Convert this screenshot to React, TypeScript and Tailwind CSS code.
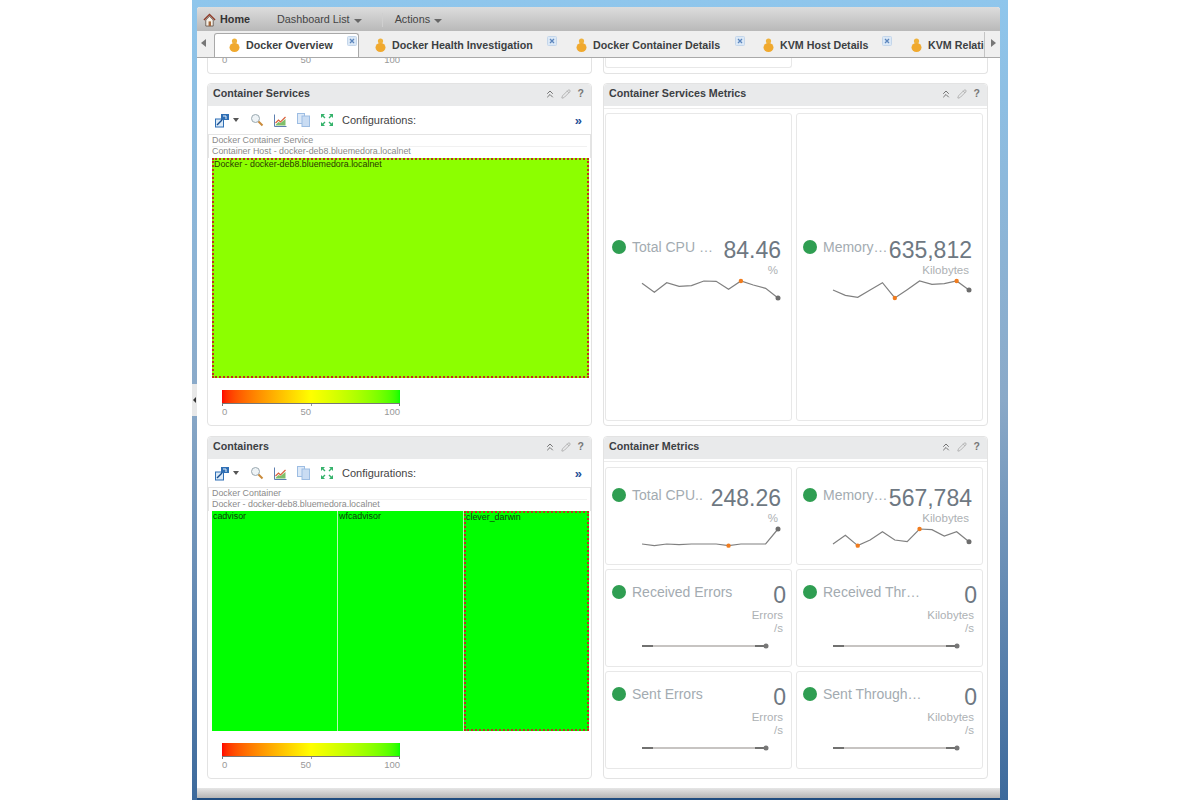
import { ChevronsUp, Pencil } from "lucide-react";

const tabs = [
  { label: "Docker Overview", active: true, width: "w-[145px]", text: "w-[100px]" },
  { label: "Docker Health Investigation", width: "w-[201px]", text: "w-[154px]" },
  { label: "Docker Container Details", width: "w-[187px]", text: "w-[141px]" },
  { label: "KVM Host Details", width: "w-[148px]", text: "w-[101px]" },
  { label: "KVM Relationships", width: "w-[148px]", text: "w-[102px]" },
];

const servicesMetrics = [
  { title: "Total CPU …", value: "84.46", unit: ["%"], ys: [188, 215, 186, 197, 195, 181, 182, 206, 181, 193, 203, 232], marks: [8] },
  { title: "Memory…", value: "635,812", unit: ["Kilobytes"], ys: [208, 224, 230, 208, 186, 232, 207, 181, 191, 189, 181, 208], marks: [5, 10] },
];

const containerMetrics = [
  { title: "Total CPU..", value: "248.26", unit: ["%"], ys: [188, 193, 188, 190, 188, 188, 188, 193, 188, 188, 188, 143], marks: [7] },
  { title: "Memory…", value: "567,784", unit: ["Kilobytes"], ys: [188, 162, 193, 176, 151, 176, 181, 143, 145, 164, 151, 181], marks: [2, 7] },
  { title: "Received Errors", value: "0", unit: ["Errors", "/s"], flat: true },
  { title: "Received Thr…", value: "0", unit: ["Kilobytes", "/s"], flat: true },
  { title: "Sent Errors", value: "0", unit: ["Errors", "/s"], flat: true },
  { title: "Sent Through…", value: "0", unit: ["Kilobytes", "/s"], flat: true },
];

function HomeIcon() {
  return (
    <svg width="13" height="14" viewBox="0 0 14 15" className="shrink-0">
      <path d="M1 7.500 7 1.500l6 6" fill="none" stroke="#8f3a26" strokeWidth="1.500" />
      <path d="M3 7.500V14h8V7.500L7 3.500z" fill="#f3efe6" stroke="#5f5148" strokeWidth="0.9" />
      <rect x="6" y="9" width="2.600" height="5" fill="#a5673a" />
    </svg>
  );
}

function PersonIcon() {
  return (
    <svg width="11" height="14" viewBox="0 0 11 14" className="shrink-0">
      <circle cx="5.500" cy="3" r="2.600" fill="#efb23c" />
      <ellipse cx="5.500" cy="9.500" rx="5" ry="4.500" fill="#f0a92e" />
    </svg>
  );
}

function CloseBadge() {
  return (
    <svg width="10" height="10" viewBox="0 0 10 10">
      <rect x="0.500" y="0.500" width="9" height="9" rx="1" fill="#dbe8f6" stroke="#c4d6ea" />
      <path d="M3 3l4 4M7 3l-4 4" stroke="#5c86bd" strokeWidth="1.300" />
    </svg>
  );
}

function Caret() {
  return <span className="block w-0 h-0 border-x-[4px] border-x-transparent border-t-[4px] border-t-[#666] mt-[2px]" />;
}

function PanelHeader({ title }: { title: string }) {
  return (
    <div className="h-[22px] bg-[#e9eaeb] flex items-center pl-[5px] pr-[7px] pb-[3px] rounded-t-sm">
      <span className="font-bold text-[10.7px] text-[#3c4043] flex-1">{title}</span>
      <ChevronsUp size={12} color="#555" strokeWidth={1.600} />
      <Pencil size={10} color="#aaa" className="ml-[5px]" />
      <span className="ml-[7px] font-bold text-[10.5px] text-[#777]">?</span>
    </div>
  );
}

function Toolbar() {
  return (
    <div className="h-[28px] flex items-center pl-[7px] pr-[9px] shrink-0">
      <svg width="15" height="15" viewBox="0 0 15 15">
        <rect x="0.500" y="6" width="8" height="8" fill="#dbeaf8" stroke="#2f6fb5" />
        <rect x="6" y="1" width="8" height="6" fill="#2f6fb5" />
        <path d="M8 3h3v3" fill="none" stroke="#e6f0fa" />
        <path d="M2 12l5-5" stroke="#1a4f8f" strokeWidth="1.400" />
      </svg>
      <span className="ml-[3px] mr-[11px]">
        <span className="block w-0 h-0 border-x-[3.5px] border-x-transparent border-t-[4px] border-t-[#555]" />
      </span>
      <svg width="14" height="14" viewBox="0 0 14 14" className="mr-[10px]">
        <circle cx="5.500" cy="5.500" r="4" fill="#eef3f6" stroke="#9aa8b0" />
        <path d="M8.500 8.500l4 4" stroke="#c98a3a" strokeWidth="2" />
      </svg>
      <svg width="13" height="13" viewBox="0 0 13 13" className="mr-[10px]">
        <path d="M1.500 11l3-3 2 1 5-4v6.500h-10z" fill="#7fbf6a" />
        <path d="M.5.5v12h12" fill="none" stroke="#5d7fb0" />
        <path d="M1.500 9l3-3 2 2 5-5" fill="none" stroke="#d9603b" strokeWidth="1.200" />
      </svg>
      <svg width="13" height="14" viewBox="0 0 13 14" className="mr-[10px]">
        <rect x="0.500" y="0.500" width="7" height="10" fill="#dce9f8" stroke="#9dbde3" />
        <rect x="5" y="3" width="7.500" height="10.500" fill="#c9dcf3" stroke="#9dbde3" />
      </svg>
      <svg width="14" height="14" viewBox="0 0 14 14" className="mr-[8px]">
        <path d="M1 1h4L1 5zM13 1H9l4 4zM1 13h4l-4-4zM13 13H9l4-4z" fill="#35b26b" />
        <path d="M2 2l3 3M12 2L9 5M2 12l3-3M12 12L9 9" stroke="#35b26b" strokeWidth="1.400" />
      </svg>
      <span className="text-[11px] text-[#444] flex-1">Configurations:</span>
      <span className="font-bold text-[13px] leading-[13px] text-[#1f4f96]">»</span>
    </div>
  );
}

function Legend() {
  return (
    <div className="w-[178px] ml-[14px] mt-[12px]">
      <div className="h-[14px] bg-gradient-to-r from-[#ff0000] via-[#ffff00] to-[#00ff00] border-b border-[#777]" />
      <div className="flex justify-between h-[2px]">
        <span className="w-px bg-[#777]" />
        <span className="w-px bg-[#999]" />
        <span className="w-px bg-[#777]" />
      </div>
      <div className="flex justify-between text-[9.5px] leading-[12px] text-[#999]">
        <span>0</span>
        <span>50</span>
        <span>100</span>
      </div>
    </div>
  );
}

function HeatPanel({ title, crumbs, children }: { title: string; crumbs: string[]; children: React.ReactNode }) {
  return (
    <section className="flex-1 flex flex-col border border-[#e3e3e3] rounded-sm">
      <PanelHeader title={title} />
      <Toolbar />
      <div className="border-t border-x border-[#e4e4e4] px-[3px]">
        <div className="h-[11px] leading-[11px] text-[8.9px] text-[#8a8a8a] whitespace-nowrap">{crumbs[0]}</div>
        <div className="h-[12px] leading-[9px] text-[8.9px] text-[#8a8a8a] whitespace-nowrap border-t border-[#f1f1f1]">{crumbs[1]}</div>
      </div>
      {children}
      <Legend />
    </section>
  );
}

function Spark({ ys, marks, flat }: { ys?: number[]; marks?: number[]; flat?: boolean }) {
  if (flat || !ys) {
    return (
      <svg width="130" height="8" viewBox="0 0 130 8" className="ml-[36px] block">
        <path d="M0 4h124" stroke="#8f8a86" strokeWidth="1.200" />
        <path d="M0 4h11M113 4h11" stroke="#555" strokeWidth="1.400" />
        <circle cx="124" cy="4" r="2.500" fill="#777" />
      </svg>
    );
  }
  const pts = ys.map((y, i) => [(i * 136) / 11 + 2, y / 3] as const);
  const minY = Math.min(...ys) / 3 - 3;
  return (
    <svg width="142" height="34" viewBox={`0 ${minY} 142 34`} className="ml-[34px] block">
      <polyline points={pts.map((p) => p.join(",")).join(" ")} fill="none" stroke="#808080" strokeWidth="1.200" />
      {marks?.map((m) => <circle key={m} cx={pts[m][0]} cy={pts[m][1]} r="2.200" fill="#f07c1e" />)}
      <circle cx={pts[11][0]} cy={pts[11][1]} r="2.500" fill="#6d6d6d" />
    </svg>
  );
}

type Metric = { title: string; value: string; unit: string[]; ys?: number[]; marks?: number[]; flat?: boolean };

function MetricCard({ m, tall }: { m: Metric; tall?: boolean }) {
  return (
    <div className={`flex flex-col justify-center border border-[#e8e8e8] rounded-[3px] min-w-0 ${tall ? "h-[308px] pt-[14px]" : "h-[98px]"} ${!tall && !m.flat ? "pt-[12px]" : ""}`}>
      <div className={`flex items-start pl-[6px] ${m.flat ? "pr-[5px]" : "pr-[10px]"}`}>
        <span className="w-[14px] h-[14px] mt-px rounded-full bg-[#2f9e52] shrink-0" />
        <span className="ml-[6px] text-[14px] leading-[16px] text-[#a3abb1] whitespace-nowrap flex-1">{m.title}</span>
        <span className="text-[23px] leading-[24px] mt-[-1px] text-[#6e7882] whitespace-nowrap">{m.value}</span>
      </div>
      <div className={`text-right text-[11.5px] leading-[13px] text-[#adb1b4] mt-[2px] ${m.flat ? "pr-[8px]" : "pr-[13px]"}`}>
        {m.unit.map((u) => <div key={u}>{u}</div>)}
      </div>
      <div className={m.flat ? "mt-[7px] mb-[2px]" : "mt-px h-[32px]"}>
        <Spark ys={m.ys} marks={m.marks} flat={m.flat} />
      </div>
    </div>
  );
}

export default function App() {
  return (
    <div className="h-[800px] flex justify-center bg-white overflow-hidden" style={{ fontFamily: '"Liberation Sans", Arial, sans-serif' }}>
      <div className="relative w-[816px] h-[800px] pl-[5px] pr-[8px] pt-[7px] bg-gradient-to-b from-[#8fc6ec] via-[#8aa9c8] to-[#3d6a9c]">
        {/* collapse handle */}
        <div className="absolute left-0 top-[384px] w-[5px] h-[32px] bg-[#e8e8e8] flex items-center justify-center">
          <span className="w-0 h-0 border-y-[3px] border-y-transparent border-r-[3px] border-r-[#333]" />
        </div>

        <div className="flex flex-col h-[791px] bg-white overflow-hidden rounded-t-[3px]">
          {/* top nav */}
          <div className="h-[24px] shrink-0 bg-gradient-to-b from-[#dddddd] to-[#b9b9b9] flex items-center pl-[6px] pt-px text-[10.8px] text-[#444]">
            <HomeIcon />
            <span className="ml-[4px] font-bold text-[#333] w-[57px]">Home</span>
            <span>Dashboard List</span>
            <span className="ml-[4px]"><Caret /></span>
            <span className="ml-[20px] w-px h-[14px] bg-[#cfcfcf]" />
            <span className="ml-[12px]">Actions</span>
            <span className="ml-[4px]"><Caret /></span>
          </div>

          {/* tab strip */}
          <div className="h-[27px] shrink-0 bg-[#efefef] border-b border-[#a9a9a9] flex items-end">
            <div className="w-[17px] h-[25px] shrink-0 flex items-center pl-[4px] pb-[3px]">
              <span className="w-0 h-0 border-y-[4px] border-y-transparent border-r-[5px] border-r-[#777]" />
            </div>
            <div className="flex items-end flex-1 overflow-hidden min-w-0">
              {tabs.map((t) => (
                <div
                  key={t.label}
                  className={`${t.width} shrink-0 flex items-start rounded-t-[3px] ${t.active ? "h-[24px] pl-[14px] bg-white border border-b-0 border-[#a9a9a9]" : "h-[23px] pl-[16px]"}`}
                >
                  <span className="mt-[4px]"><PersonIcon /></span>
                  <span className={`${t.text} shrink-0 ml-[6px] mt-[4px] font-bold text-[10.7px] leading-[14px] text-[#3c3f42] whitespace-nowrap`}>{t.label}</span>
                  <span className="mt-[2px] ml-px"><CloseBadge /></span>
                </div>
              ))}
            </div>
            <div className="w-[16px] h-[25px] shrink-0 border-l border-[#c4c4c4] bg-[#efefef] flex items-center pl-[6px] pb-[3px]">
              <span className="w-0 h-0 border-y-[4px] border-y-transparent border-l-[5px] border-l-[#777]" />
            </div>
          </div>

          {/* dashboard widgets */}
          <div className="flex-1 overflow-hidden pl-[10px] pr-[12px]">
            <div className="grid grid-cols-2 gap-x-[11px]">
              <div className="h-[16px] overflow-hidden border border-t-0 border-[#e3e3e3] rounded-b-sm">
                <div className="w-[178px] ml-[14px] mt-[-4px] flex justify-between text-[9.5px] leading-[12px] text-[#999]">
                  <span>0</span>
                  <span>50</span>
                  <span>100</span>
                </div>
              </div>
              <div className="h-[16px] border border-t-0 border-[#e3e3e3] rounded-b-sm pl-px">
                <div className="w-[187px] h-[10px] border border-t-0 border-[#e8e8e8] rounded-b-[3px]" />
              </div>
            </div>

            <div className="grid grid-cols-2 gap-x-[11px] mt-[9px]">
              <div className="h-[343px] flex flex-col">
                <HeatPanel title="Container Services" crumbs={["Docker Container Service", "Container Host - docker-deb8.bluemedora.localnet"]}>
                  <div className="ml-[4px] mr-[2px] h-[220px] bg-[#8cff00] border-2 border-dotted border-[#c0301e] text-[8.9px] leading-[8px] text-[#2a3a00] shrink-0">
                    Docker - docker-deb8.bluemedora.localnet
                  </div>
                </HeatPanel>
              </div>
              <section className="h-[343px] border border-[#e3e3e3] rounded-sm">
                <PanelHeader title="Container Services Metrics" />
                <div className="border-t border-[#ececec] mt-[2px] pt-[4px] pl-px pr-[4px] grid grid-cols-2 gap-x-[4px]">
                  {servicesMetrics.map((m) => <MetricCard key={m.value} m={m} tall />)}
                </div>
              </section>
            </div>

            <div className="grid grid-cols-2 gap-x-[11px] mt-[10px]">
              <div className="h-[343px] flex flex-col">
                <HeatPanel title="Containers" crumbs={["Docker Container", "Docker - docker-deb8.bluemedora.localnet"]}>
                  <div className="ml-[4px] mr-[2px] h-[220px] shrink-0 grid grid-cols-3 gap-x-px bg-[#b8f5b8] text-[8.9px] leading-[10px] text-[#0c3a0c]">
                    <div className="bg-[#00ff00] pl-px">cadvisor</div>
                    <div className="bg-[#00ff00] pl-px">wfcadvisor</div>
                    <div className="bg-[#00ff00] border-2 border-dotted border-[#c0301e] leading-[8px]">clever_darwin</div>
                  </div>
                </HeatPanel>
              </div>
              <section className="h-[343px] border border-[#e3e3e3] rounded-sm">
                <PanelHeader title="Container Metrics" />
                <div className="border-t border-[#ececec] mt-[2px] pt-[5px] pl-px pr-[4px] grid grid-cols-2 gap-x-[4px] gap-y-[4px]">
                  {containerMetrics.map((m) => <MetricCard key={m.title} m={m} />)}
                </div>
              </section>
            </div>
          </div>

          <div className="h-[10px] shrink-0 bg-gradient-to-b from-[#e6e6e6] to-[#b5b5b5]" />
        </div>
        <div className="h-[2px] bg-[#1f4c7f]" />
      </div>
    </div>
  );
}
